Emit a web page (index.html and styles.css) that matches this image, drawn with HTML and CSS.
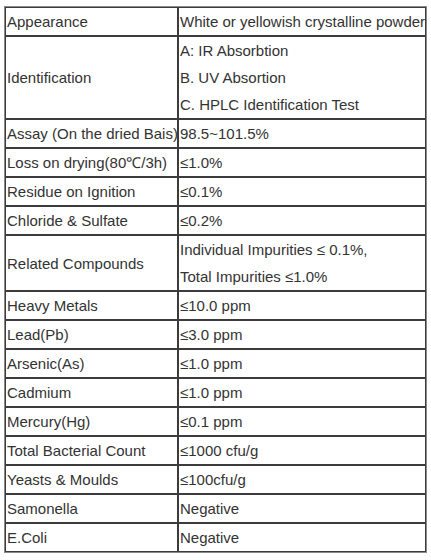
FILE: index.html
```html
<!DOCTYPE html>
<html>
<head>
<meta charset="utf-8">
<link rel="stylesheet" href="styles.css">
</head>
<body>
<div class="wrap">
<table class="spec">
  <colgroup><col class="c1"><col class="c2"></colgroup>
  <tbody>
    <tr><td>Appearance</td><td>White or yellowish crystalline powder</td></tr>
    <tr><td>Identification</td><td><div class="ln">A: IR Absorbtion</div><div class="ln">B. UV Absortion</div><div class="ln">C. HPLC Identification Test</div></td></tr>
    <tr><td>Assay (On the dried Bais)</td><td>98.5~101.5%</td></tr>
    <tr><td>Loss on drying(80℃/3h)</td><td>≤1.0%</td></tr>
    <tr><td>Residue on Ignition</td><td>≤0.1%</td></tr>
    <tr><td>Chloride &amp; Sulfate</td><td>≤0.2%</td></tr>
    <tr><td>Related Compounds</td><td><div class="ln">Individual Impurities ≤ 0.1%,</div><div class="ln">Total Impurities ≤1.0%</div></td></tr>
    <tr><td>Heavy Metals</td><td>≤10.0 ppm</td></tr>
    <tr><td>Lead(Pb)</td><td>≤3.0 ppm</td></tr>
    <tr><td>Arsenic(As)</td><td>≤1.0 ppm</td></tr>
    <tr><td>Cadmium</td><td>≤1.0 ppm</td></tr>
    <tr><td>Mercury(Hg)</td><td>≤0.1 ppm</td></tr>
    <tr><td>Total Bacterial Count</td><td>≤1000 cfu/g</td></tr>
    <tr><td>Yeasts &amp; Moulds</td><td>≤100cfu/g</td></tr>
    <tr><td>Samonella</td><td>Negative</td></tr>
    <tr><td>E.Coli</td><td>Negative</td></tr>
  </tbody>
</table>
</div>
</body>
</html>
```
FILE: styles.css
```css
html, body {
  margin: 0;
  padding: 0;
  background: #ffffff;
}
.wrap {
  padding: 6px 0 0 4px;
}
.spec {
  border-collapse: separate;
  border-spacing: 0;
  border: 1px solid #8a8a8a;
  width: 423px;
  table-layout: fixed;
  font-family: "Liberation Sans", Arial, sans-serif;
  font-size: 15px;
  color: #333333;
}
.c1 { width: 173px; }
.c2 { width: 248px; }
.spec td {
  border: 1px solid #3c3c3c;
  padding: 0 1px;
  line-height: 27px;
  vertical-align: middle;
  white-space: nowrap;
  overflow: hidden;
}
.ln {
  line-height: 27px;
}
```
